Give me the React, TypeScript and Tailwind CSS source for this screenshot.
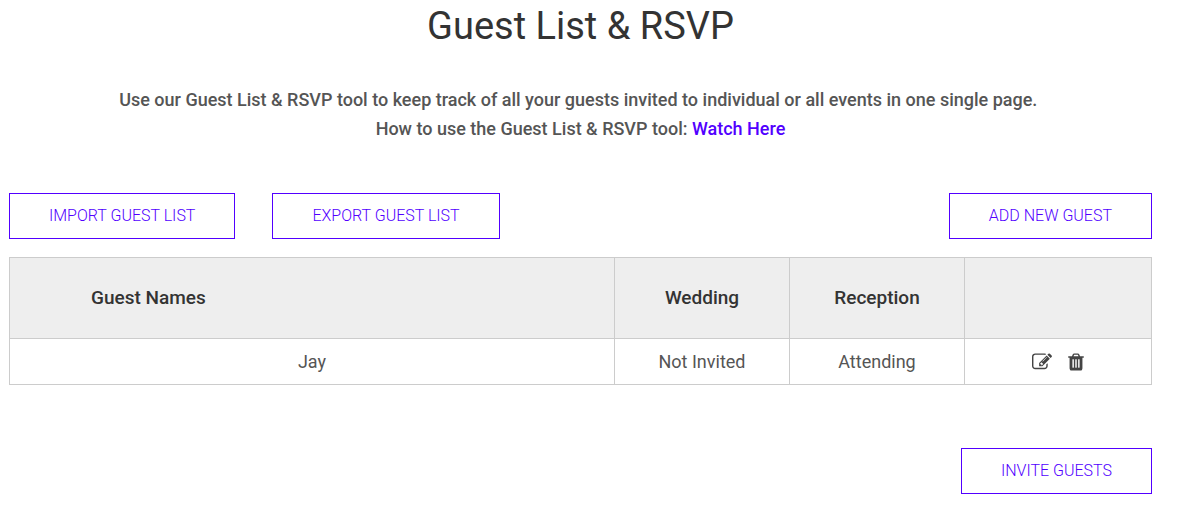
import { FC } from "react";

interface Guest {
  name: string;
  wedding: string;
  reception: string;
}

const guests: Guest[] = [{ name: "Jay", wedding: "Not Invited", reception: "Attending" }];

const EditIcon: FC = () => (
  <svg viewBox="0 0 1792 1792" className="size-5" fill="currentColor" aria-hidden="true">
    <path d="M888 1184l116-116-152-152-116 116v56h96v96h56zm440-720q-16-16-33 1l-350 350q-17 17-1 33t33-1l350-350q17-17 1-33zm80 594v190q0 119-84.5 203.5t-203.5 84.5h-832q-119 0-203.5-84.5t-84.5-203.5v-832q0-119 84.5-203.5t203.5-84.5h832q63 0 117 25 15 7 18 23 3 17-9 29l-49 49q-14 14-32 8-23-6-45-6h-832q-66 0-113 47t-47 113v832q0 66 47 113t113 47h832q66 0 113-47t47-113v-126q0-13 9-22l64-64q15-15 35-7t20 29zm-96-738l288 288-672 672h-288v-288zm444 132l-92 92-288-288 92-92q28-28 68-28t68 28l152 152q28 28 28 68t-28 68z" />
  </svg>
);

const TrashIcon: FC = () => (
  <svg viewBox="192 0 1408 1792" className="h-5 w-4" fill="currentColor" aria-hidden="true">
    <path d="M704 1376v-704q0-14-9-23t-23-9h-64q-14 0-23 9t-9 23v704q0 14 9 23t23 9h64q14 0 23-9t9-23zm256 0v-704q0-14-9-23t-23-9h-64q-14 0-23 9t-9 23v704q0 14 9 23t23 9h64q14 0 23-9t9-23zm256 0v-704q0-14-9-23t-23-9h-64q-14 0-23 9t-9 23v704q0 14 9 23t23 9h64q14 0 23-9t9-23zm-544-992h448l-48-117q-7-9-17-11h-317q-10 2-17 11zm928 32v64q0 14-9 23t-23 9h-96v948q0 83-47 143.5t-113 60.5h-832q-66 0-113-58.5t-47-141.5v-952h-96q-14 0-23-9t-9-23v-64q0-14 9-23t23-9h309l70-167q15-37 54-63t79-26h320q40 0 79 26t54 63l70 167h309q14 0 23 9t9 23z" />
  </svg>
);

const OutlineButton: FC<{ label: string }> = ({ label }) => (
  <button
    type="button"
    className="border border-[#5200ff] px-[39px] py-[11px] text-base leading-[22px] font-light text-[#5200ff] uppercase"
  >
    {label}
  </button>
);

const App: FC = () => {
  return (
    <main className="bg-white pr-[47px] pb-6 pl-[9px] font-['Roboto',sans-serif] text-lg text-[#555]">
      <h1 className="pt-[3px] text-center text-[38px] leading-[46px] text-[#333]">
        Guest List &amp; RSVP
      </h1>
      <p className="mt-9 text-center leading-[29px] font-medium">
        Use our Guest List &amp; RSVP tool to keep track of all your guests invited to individual or
        all events in one single page.&nbsp;
        <br />
        How to use the Guest List &amp; RSVP tool:{" "}
        <a href="#watch" className="text-[#5200ff]">
          Watch Here
        </a>
      </p>

      <div className="mt-[50px] flex items-center gap-[37px]">
        <OutlineButton label="Import Guest List" />
        <OutlineButton label="Export Guest List" />
        <div className="ml-auto">
          <OutlineButton label="Add New Guest" />
        </div>
      </div>

      <table className="mt-[18px] w-full table-fixed border-collapse border border-[#ccc] text-center">
        <colgroup>
          <col />
          <col className="w-[175px]" />
          <col className="w-[175px]" />
          <col className="w-[187px]" />
        </colgroup>
        <thead className="bg-[#eee] text-[19px] text-[#333]">
          <tr className="h-[81px]">
            <th className="border border-[#ccc] pl-[81px] text-left font-medium">Guest Names</th>
            <th className="border border-[#ccc] font-medium">Wedding</th>
            <th className="border border-[#ccc] font-medium">Reception</th>
            <td className="border border-[#ccc]" />
          </tr>
        </thead>
        <tbody>
          {guests.map((guest) => (
            <tr key={guest.name} className="h-[46px]">
              <td className="border border-[#ccc]">{guest.name}</td>
              <td className="border border-[#ccc]">{guest.wedding}</td>
              <td className="border border-[#ccc]">{guest.reception}</td>
              <td className="border border-[#ccc]">
                <div className="flex items-center justify-center gap-4 text-[#444]">
                  <button type="button" aria-label={`Edit ${guest.name}`}>
                    <EditIcon />
                  </button>
                  <button type="button" aria-label={`Delete ${guest.name}`}>
                    <TrashIcon />
                  </button>
                </div>
              </td>
            </tr>
          ))}
        </tbody>
      </table>

      <div className="mt-[63px] flex justify-end">
        <OutlineButton label="Invite Guests" />
      </div>
    </main>
  );
};

export default App;
